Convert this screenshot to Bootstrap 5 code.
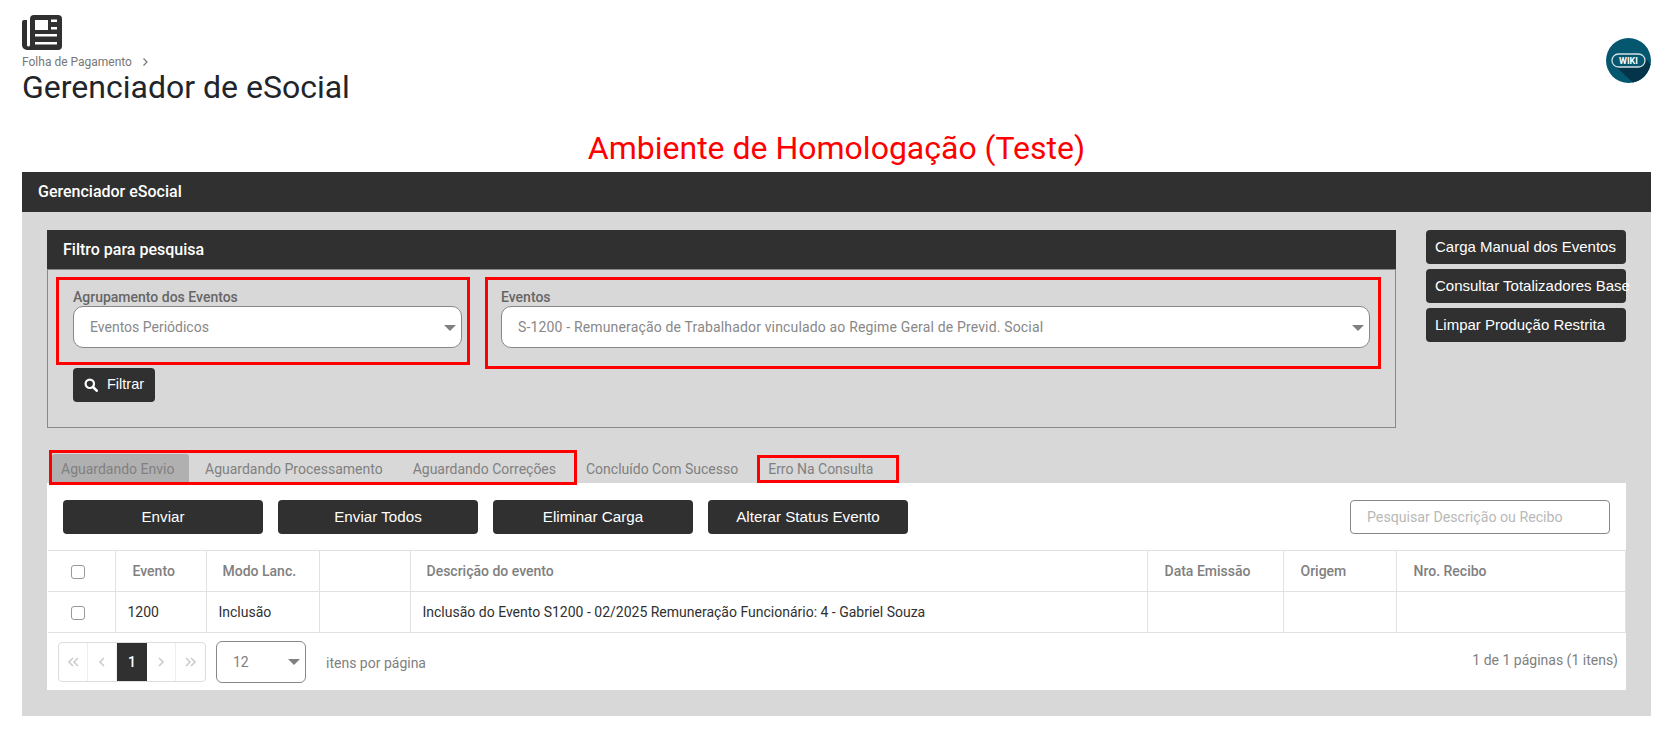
<!doctype html>
<html lang="pt-BR">
<head>
<meta charset="utf-8">
<link href="https://cdn.jsdelivr.net/npm/bootstrap@5.3.0/dist/css/bootstrap.min.css" rel="stylesheet">
<style>
body{font-family:Roboto,sans-serif;color:#212529;background:#fff;margin:0;overflow:hidden}
.page-shell{padding:15px 20px 0 22px}
.top-row{height:92px}
.crumb{font-size:12px;line-height:14px;color:#777;margin-top:5px}
.crumb svg{margin-left:10px;vertical-align:-1px}
.page-title{font-size:32px;line-height:37px;font-weight:400;margin:0;color:#212529}
.env-title{font-size:32px;line-height:38px;color:#f00;text-align:center;margin:22px 0 5px;font-weight:400}
.wiki-logo{margin-top:23px}
.panel-shell{background:#d8d8d8;height:544px}
.panel-head{background:#303030;color:#fff;font-weight:500;font-size:16px;height:40px;line-height:39px;padding-left:16px}
.panel-body-area{padding:18px 25px 0 25px}
.filter-box{width:1349px;height:198px;border:1px solid #888;border-top:0}
.filter-head{background:#303030;color:#fff;font-weight:500;font-size:16px;height:40px;line-height:39px;padding-left:16px;margin:0 -1px;border-bottom:1px solid #888}
.red-box{border:3px solid #f00}
.fld-a{width:414px;height:88px;margin:7px 0 0 8px;padding:9px 5px 0 14px}
.fld-b{width:896px;height:92px;margin:7px 0 0 15px;padding:9px 8px 0 13px}
.fld-label{font-size:14px;line-height:16px;font-weight:500;color:#666;display:block;margin-bottom:1px}
.fake-select{height:42px;background:#fff;border:1px solid #888;border-radius:10px;color:#888;font-size:14px;line-height:40px;padding-left:16px;position:relative}
.fld-b .fake-select{letter-spacing:.16px}
.caret-down{position:absolute;right:5px;top:18px;width:0;height:0;border-left:6px solid transparent;border-right:6px solid transparent;border-top:6px solid #808080}
.dark-btn{background:#303030;border:0;color:#fff;border-radius:4px;font-family:"Liberation Sans",Arial,sans-serif;font-size:15.2px;height:34px;padding:0}
.dark-btn:hover{background:#303030;color:#fff}
.btn-filter{width:82px;font-size:14.5px;margin:-1px 0 0 25px;display:flex;align-items:center;justify-content:center;gap:9px}
.side-col{width:200px;margin-left:30px}
.side-btn{display:block;width:200px;margin-bottom:5px;text-align:left;padding-left:9px;white-space:nowrap;font-size:15px;overflow:visible}
.tab-row{margin:22px 0 0 2px;height:34px}
.tabs-box{height:35px;width:528px;padding:1px 0 0 0}
.tab-item{font-size:14px;color:#808080;line-height:30px;height:28px;padding:0 12px 0 9px;border-radius:3px 3px 0 0}
.tab-active{background:#b0b0b0;width:137px}
.tab-plain{padding:0 13px 0 16px}
.tab-plain+.tab-plain{padding-left:17px}
.tab-err{height:28px;margin:5px 0 0 19px;padding:0 0 0 8px;width:142px;line-height:22px;font-size:14px;color:#808080}
.tab-mid{font-size:14px;color:#808080;padding:0 0 0 9px;line-height:38px}
.content-area{background:#fff;width:1579px;height:207px;margin-top:-1px;padding-top:17px}
.tool-row{padding:0 16px;height:50px}
.tool-btn{width:200px;margin-right:15px}
.search-input{width:260px;height:34px;margin-left:auto;border:1px solid #888;border-radius:4px;font-size:14.2px;padding:0 16px;color:#333}
.search-input::placeholder{color:#b8b8b8}
.grid-table{width:1578px;table-layout:fixed;border-collapse:collapse;margin-left:1px;font-size:14px}
.grid-table th,.grid-table td{border:1px solid #e2e2e2;height:41px;padding:0 12px;font-weight:400;vertical-align:middle;white-space:nowrap}
.grid-table th{color:#808080;font-weight:500;padding-left:16px}
.grid-table th.pad-more{padding-left:17px}
.grid-table td{color:#303030}
.grid-table tr>*:first-child{border-left:0;padding:0 6px 2px 0;text-align:center}
.box-check{display:inline-block;width:14px;height:14px;border:1px solid #999;border-radius:3px;vertical-align:-4px}
.pager-row{padding:9px 8px 0 11px;font-size:14px;color:#808080}
.pager-list{border:1px solid #ddd;border-radius:4px;height:40px;width:148px;margin:0;overflow:hidden;padding:0;list-style:none}
.pager-list li{width:29.4px;height:38px;display:flex;align-items:center;justify-content:center;border-right:1px solid #eee}
.pager-list li:last-child{border-right:0}
.pager-list li.on{background:#303030;color:#fff;font-weight:500;font-size:14px;border:0}
.pager-list svg{fill:none;stroke:#ccc;stroke-width:1.6}
.size-select{width:90px;height:42px;margin:-1px 0 0 10px;font-size:14px;line-height:40px;padding-left:16px;border-radius:6px;color:#808080;background:#fff;border:1px solid #888;position:relative}
.size-select .caret-down{top:17px}
.per-page{margin-left:20px;line-height:42px}
.page-count{margin-left:auto;line-height:36px}
</style>
</head>
<body>
<div class="page-shell">
  <div class="top-row d-flex justify-content-between">
    <div>
      <svg width="40" height="35" viewBox="0 0 40 35" class="d-block" aria-hidden="true"><path fill="#303030" fill-rule="evenodd" d="M8 4a4 4 0 0 1 4-4h24a4 4 0 0 1 4 4v27a4 4 0 0 1-4 4H5a5 5 0 0 1-5-5V7a2 2 0 0 1 2-2h3v25a1.500 1.500 0 0 0 3 0zM13 5v10h13V5zM29 4.500v2.500h6V4.500zM29 12v2.500h6V12zM13 19v2.500h22V19zM13 27v2.500h22V27z"/></svg>
      <div class="crumb">Folha de Pagamento<svg width="7" height="10" viewBox="0 0 7 10" aria-hidden="true"><path d="M1.500 1.500L5 5L1.500 8.500" fill="none" stroke="#777" stroke-width="1.200"/></svg></div>
      <h1 class="page-title">Gerenciador de eSocial</h1>
    </div>
    <svg class="wiki-logo" width="45" height="45" viewBox="0 0 45 45" aria-hidden="true"><circle cx="22.500" cy="22.500" r="22.500" fill="#05566f"/><path d="M9 28L36 17L44.500 26A22.500 22.500 0 0 1 27 44.500z" fill="#03344a"/><rect x="6" y="16" width="33" height="13" rx="6.500" fill="#05566f" stroke="#d5e0e4" stroke-width="1.300"/><text x="22.500" y="26" text-anchor="middle" font-family="Roboto,sans-serif" font-size="9" font-weight="700" fill="#fff">WIKI</text></svg>
  </div>
  <h2 class="env-title">Ambiente de Homologação (Teste)</h2>
  <div class="panel-shell">
    <div class="panel-head">Gerenciador eSocial</div>
    <div class="panel-body-area">
      <div class="d-flex">
        <div class="filter-box">
          <div class="filter-head">Filtro para pesquisa</div>
          <div class="d-flex align-items-start">
            <div class="red-box fld-a"><label class="fld-label">Agrupamento dos Eventos</label><div class="fake-select">Eventos Periódicos<span class="caret-down"></span></div></div>
            <div class="red-box fld-b"><label class="fld-label">Eventos</label><div class="fake-select">S-1200 - Remuneração de Trabalhador vinculado ao Regime Geral de Previd. Social<span class="caret-down"></span></div></div>
          </div>
          <button class="btn dark-btn btn-filter" type="button"><svg width="14" height="14" viewBox="0 0 14 14" aria-hidden="true"><circle cx="5.800" cy="5.800" r="4.200" fill="none" stroke="#fff" stroke-width="2.200"/><path d="M9 9l3.700 3.700" stroke="#fff" stroke-width="2.600" stroke-linecap="round"/></svg>Filtrar</button>
        </div>
        <div class="side-col">
          <button class="btn dark-btn side-btn" type="button">Carga Manual dos Eventos</button>
          <button class="btn dark-btn side-btn" type="button">Consultar Totalizadores Base</button>
          <button class="btn dark-btn side-btn" type="button">Limpar Produção Restrita</button>
        </div>
      </div>
      <div class="tab-row d-flex align-items-start">
        <div class="red-box tabs-box d-flex">
          <div class="tab-item tab-active">Aguardando Envio</div>
          <div class="tab-item tab-plain">Aguardando Processamento</div>
          <div class="tab-item tab-plain">Aguardando Correções</div>
        </div>
        <div class="tab-mid">Concluído Com Sucesso</div>
        <div class="red-box tab-err">Erro Na Consulta</div>
      </div>
      <div class="content-area">
        <div class="tool-row d-flex">
          <button class="btn dark-btn tool-btn" type="button">Enviar</button>
          <button class="btn dark-btn tool-btn" type="button">Enviar Todos</button>
          <button class="btn dark-btn tool-btn" type="button">Eliminar Carga</button>
          <button class="btn dark-btn tool-btn" type="button">Alterar Status Evento</button>
          <input class="search-input" type="text" placeholder="Pesquisar Descrição ou Recibo">
        </div>
        <table class="grid-table">
          <colgroup><col style="width:67px"><col style="width:91px"><col style="width:113px"><col style="width:91px"><col style="width:737px"><col style="width:136px"><col style="width:113px"><col></colgroup>
          <thead><tr><th><span class="box-check"></span></th><th class="pad-more">Evento</th><th>Modo Lanc.</th><th></th><th>Descrição do evento</th><th class="pad-more">Data Emissão</th><th class="pad-more">Origem</th><th class="pad-more">Nro. Recibo</th></tr></thead>
          <tbody><tr><td><span class="box-check"></span></td><td>1200</td><td>Inclusão</td><td></td><td>Inclusão do Evento S1200 - 02/2025 Remuneração Funcionário: 4 - Gabriel Souza</td><td></td><td></td><td></td></tr></tbody>
        </table>
        <div class="pager-row d-flex align-items-start">
          <ul class="pager-list d-flex">
            <li><svg width="11" height="10" viewBox="0 0 11 10" aria-hidden="true"><path d="M5 1L1 5L5 9M10 1L6 5L10 9"/></svg></li>
            <li><svg width="6" height="10" viewBox="0 0 6 10" aria-hidden="true"><path d="M5 1L1 5L5 9"/></svg></li>
            <li class="on">1</li>
            <li><svg width="6" height="10" viewBox="0 0 6 10" aria-hidden="true"><path d="M1 1L5 5L1 9"/></svg></li>
            <li><svg width="11" height="10" viewBox="0 0 11 10" aria-hidden="true"><path d="M1 1L5 5L1 9M6 1L10 5L6 9"/></svg></li>
          </ul>
          <div class="size-select">12<span class="caret-down"></span></div>
          <div class="per-page">itens por página</div>
          <div class="page-count">1 de 1 páginas (1 itens)</div>
        </div>
      </div>
    </div>
  </div>
</div>
<script src="https://cdn.jsdelivr.net/npm/bootstrap@5.3.0/dist/js/bootstrap.bundle.min.js"></script>
</body>
</html>
